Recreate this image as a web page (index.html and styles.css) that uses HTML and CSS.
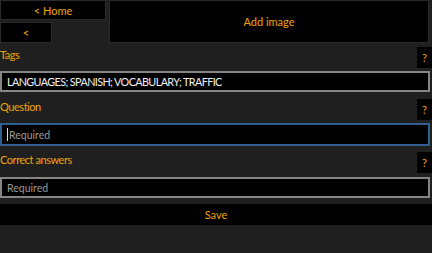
FILE: index.html
```html
<!DOCTYPE html>
<html>
<head>
<meta charset="utf-8">
<link rel="stylesheet" href="styles.css">
</head>
<body>
<div class="top">
  <div class="nav">
    <button class="btn home">&lt; Home</button>
    <button class="btn back">&lt;</button>
  </div>
  <button class="btn add">Add image</button>
</div>

<div class="head tags-head">
  <span class="label">Tags</span>
  <button class="help">?</button>
</div>
<div class="input tags-input">LANGUAGES; SPANISH; VOCABULARY; TRAFFIC</div>

<div class="head q-head">
  <span class="label">Question</span>
  <button class="help">?</button>
</div>
<div class="input focused"><span class="caret"></span><span class="ph">Required</span></div>

<div class="head a-head">
  <span class="label">Correct answers</span>
  <button class="help">?</button>
</div>
<div class="input a-input"><span class="ph">Required</span></div>

<button class="btn save">Save</button>
</body>
</html>
```

FILE: styles.css
```css
html, body {
  margin: 0;
  padding: 0;
  background: #1f1f1f;
  width: 432px;
  height: 253px;
  overflow: hidden;
  font-family: Lato, "Open Sans", sans-serif;
  font-size: 11px;
  color: #f0a30a;
}
.btn {
  background: #000;
  border: 1px solid #2a2a2a;
  color: #f0a30a;
  font-family: inherit;
  font-size: 11px;
  padding: 0;
  margin: 0;
  display: flex;
  align-items: center;
  justify-content: center;
}
.top {
  display: flex;
  gap: 3px;
  height: 43px;
  padding-right: 3px;
}
.nav {
  display: flex;
  flex-direction: column;
  gap: 2px;
  width: 106px;
}
.home {
  height: 20px;
  width: 106px;
}
.back {
  height: 21px;
  width: 52px;
}
.add {
  flex: 1;
  height: 43px;
  font-size: 11px;
}
.head {
  display: flex;
  justify-content: space-between;
  align-items: flex-start;
  height: 21px;
}
.tags-head { margin-top: 4px; }
.q-head { margin-top: 7px; }
.a-head { margin-top: 6px; }
.label {
  font-size: 11px;
  letter-spacing: -0.45px;
  line-height: 13px;
  margin-top: 1px;
}
.help {
  width: 15px;
  height: 21px;
  background: #000;
  border: none;
  color: #f0a30a;
  font-family: inherit;
  font-size: 11px;
  padding: 0;
}
.input {
  box-sizing: border-box;
  width: 430px;
  height: 21px;
  margin-top: 3px;
  background: #000;
  border: 2px solid #858585;
  color: #fff;
  font-size: 10.5px;
  display: flex;
  align-items: center;
  padding-left: 5px;
  white-space: nowrap;
}
.tags-input {
  font-size: 10.8px;
  letter-spacing: -0.6px;
  color: #f2f2f2;
}
.focused {
  border-color: #2e5f8f;
  height: 23px;
}
.a-input { margin-top: 4px; }
.ph { color: #9a9a9a; }
.caret {
  display: inline-block;
  width: 1px;
  height: 13px;
  background: #ddd;
  margin-right: 1px;
}
.save {
  width: 432px;
  height: 21px;
  margin-top: 6px;
  border: none;
}
```
